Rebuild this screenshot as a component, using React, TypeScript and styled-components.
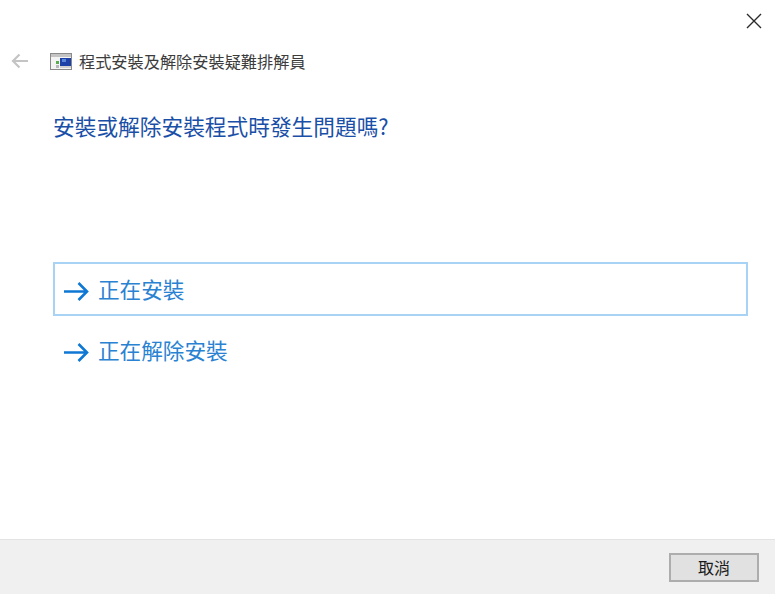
import React from "react";
import styled, { createGlobalStyle } from "styled-components";

const GlobalStyle = createGlobalStyle`
  html, body {
    margin: 0;
    padding: 0;
    background: #ffffff;
  }
`;

const Wizard = styled.div`
  width: 775px;
  height: 596px;
  display: flex;
  flex-direction: column;
  overflow: hidden;
  background: #ffffff;
  font-family: "Noto Sans CJK TC", "Noto Sans", sans-serif;
`;

const TopBar = styled.div`
  height: 41px;
  flex: none;
  display: flex;
  justify-content: flex-end;
  align-items: flex-start;
  padding: 13px 13px 0 0;
  box-sizing: border-box;
`;

const CloseButton = styled.button`
  width: 16px;
  height: 16px;
  padding: 0;
  border: 0;
  background: none;
  display: block;
`;

const NavRow = styled.div`
  height: 24px;
  flex: none;
  display: flex;
  align-items: center;
  padding-left: 11px;
  margin-top: 8px;
`;

const BackButton = styled.button`
  width: 18px;
  height: 16px;
  padding: 0;
  border: 0;
  background: none;
  display: block;
  margin-right: 21px;
`;

const AppIcon = styled.svg`
  width: 22px;
  height: 17px;
  flex: none;
  margin-right: 7px;
`;

const WindowTitle = styled.span`
  font-size: 16.2px;
  color: #3c3c3c;
`;

const Content = styled.div`
  flex: 1;
  display: flex;
  flex-direction: column;
  padding: 0 27px 0 53px;
`;

const Heading = styled.h1`
  margin: 40px 0 0;
  font-size: 21.7px;
  line-height: 26px;
  font-weight: 400;
  color: #1a4fa8;
`;

const Options = styled.div`
  margin-top: 123px;
  display: flex;
  flex-direction: column;
  gap: 7px;
`;

const Option = styled.div<{ $focused?: boolean }>`
  height: 54px;
  box-sizing: border-box;
  display: flex;
  align-items: center;
  padding: 0 0 1px 8px;
  border: 2px solid ${(p) => (p.$focused ? "#a9d3f5" : "transparent")};
  color: #2a82d2;
  font-size: 21.6px;
`;

const OptionArrow = styled.svg`
  width: 26px;
  height: 20px;
  flex: none;
  margin: 4px 9px 0 0;
`;

const Footer = styled.div`
  height: 55px;
  flex: none;
  margin-bottom: 2px;
  display: flex;
  justify-content: flex-end;
  align-items: center;
  padding-right: 16px;
  box-sizing: border-box;
  background: #f0f0f0;
  border-top: 1px solid #e3e3e3;
`;

const CancelButton = styled.button`
  width: 90px;
  height: 29px;
  padding: 0;
  box-sizing: border-box;
  border: 2px solid #adadad;
  background: #e1e1e1;
  color: #1a1a1a;
  font-family: inherit;
  font-size: 16px;
  line-height: 1;
`;

const Arrow = () => (
  <OptionArrow viewBox="0 0 26 20" fill="none" stroke="#0f78d4" strokeWidth="2.6">
    <path d="M1 10.500h23M15.500 2l8.500 8.500-8.500 8.500" />
  </OptionArrow>
);

export default function App() {
  return (
    <Wizard>
      <GlobalStyle />
      <TopBar>
        <CloseButton aria-label="close">
          <svg width="16" height="16" viewBox="0 0 16 16" fill="none" stroke="#2a2a2a" strokeWidth="1.400">
            <path d="M1 1l14 14M15 1L1 15" />
          </svg>
        </CloseButton>
      </TopBar>
      <NavRow>
        <BackButton aria-label="back">
          <svg width="18" height="16" viewBox="0 0 18 16" fill="none" stroke="#c4c4c4" strokeWidth="2.200">
            <path d="M17 8H2M8.500 1.500L2 8l6.500 6.500" />
          </svg>
        </BackButton>
        <AppIcon viewBox="0 0 22 17">
          <rect x="0.500" y="0.500" width="21" height="16" fill="#f4f4f4" stroke="#8a8a8a" />
          <rect x="1" y="1" width="20" height="3" fill="#c4c4c4" />
          <rect x="10" y="5" width="11" height="8" fill="#1c3fa8" />
          <rect x="12" y="6" width="4" height="3" fill="#5a86d8" />
          <rect x="6" y="8" width="3" height="3" fill="#5cab4c" />
          <rect x="6" y="12" width="3" height="3" fill="#b8b8b8" />
          <rect x="10" y="13" width="11" height="2" fill="#d0d0d0" />
        </AppIcon>
        <WindowTitle>程式安裝及解除安裝疑難排解員</WindowTitle>
      </NavRow>
      <Content>
        <Heading>安裝或解除安裝程式時發生問題嗎?</Heading>
        <Options>
          <Option $focused>
            <Arrow />
            正在安裝
          </Option>
          <Option>
            <Arrow />
            正在解除安裝
          </Option>
        </Options>
      </Content>
      <Footer>
        <CancelButton>取消</CancelButton>
      </Footer>
    </Wizard>
  );
}
